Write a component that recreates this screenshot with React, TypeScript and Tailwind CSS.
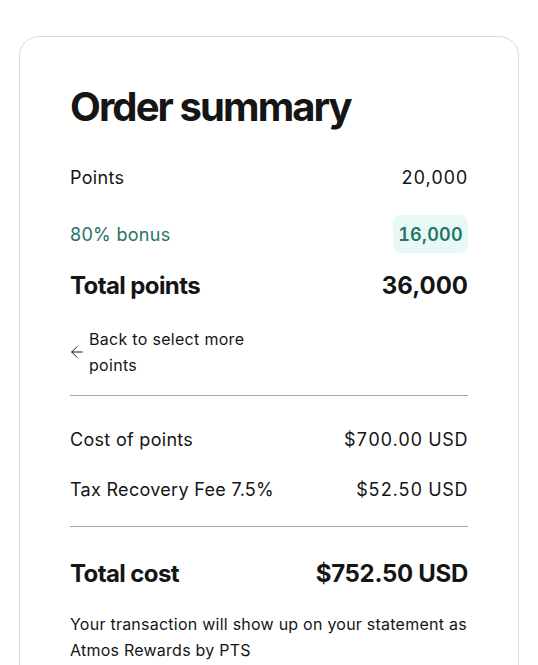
import { ArrowLeft } from "lucide-react";

function Row({ label, value }: { label: string; value: string }) {
    return (
        <div className="flex justify-between items-center h-[28px] text-[18px] leading-[28px] tracking-[0.3px]">
            <span>{label}</span>
            <span className="tabular-nums tracking-[0.6px]">{value}</span>
        </div>
    );
}

export default function App() {
    return (
        <div className="bg-white min-h-[665px] pt-[36px] px-[19px] font-['Inter',sans-serif] text-[#151515]">
            <div className="border border-[#d9d9de] rounded-[20px] pt-[46px] pb-10 px-[50px]">
                <h1 className="text-[40px] leading-[48px] font-bold tracking-[-1.9px]">
                    Order summary
                </h1>

                <div className="mt-[33px]">
                    <Row label="Points" value="20,000" />
                </div>

                <div className="mt-[23px] flex justify-between items-center text-[18px] text-[#237567] tracking-[0.3px]">
                    <span>80% bonus</span>
                    <span className="h-[38px] px-[5px] flex items-center rounded-[8px] bg-[#e8f8f6] font-semibold tabular-nums">
                        16,000
                    </span>
                </div>

                <div className="mt-[17px] flex justify-between items-center h-[32px] text-[24px] font-bold tracking-[-0.6px]">
                    <span>Total points</span>
                    <span className="tracking-[0px]">36,000</span>
                </div>

                <a
                    href="#"
                    className="mt-[24px] flex items-center gap-[3px] text-[16px] leading-[26px] tracking-[0.3px] w-[210px]"
                >
                    <ArrowLeft size={18} strokeWidth={1.3} className="shrink-0 -ml-[2px]" />
                    <span className="w-[170px]">Back to select more points</span>
                </a>

                <hr className="mt-[17px] border-t border-[#a4a4ab]" />

                <div className="mt-[30px]">
                    <Row label="Cost of points" value="$700.00 USD" />
                </div>
                <div className="mt-[22px]">
                    <Row label="Tax Recovery Fee 7.5%" value="$52.50 USD" />
                </div>

                <hr className="mt-[22px] border-t border-[#a4a4ab]" />

                <div className="mt-[31px] flex justify-between items-center h-[32px] text-[24px] font-bold tracking-[-0.6px]">
                    <span>Total cost</span>
                    <span className="tracking-[-0.3px]">$752.50 USD</span>
                </div>

                <p className="mt-[21px] text-[16px] leading-[26px] tracking-[0.24px]">
                    Your transaction will show up on your statement as Atmos Rewards by PTS
                </p>
            </div>
        </div>
    );
}
